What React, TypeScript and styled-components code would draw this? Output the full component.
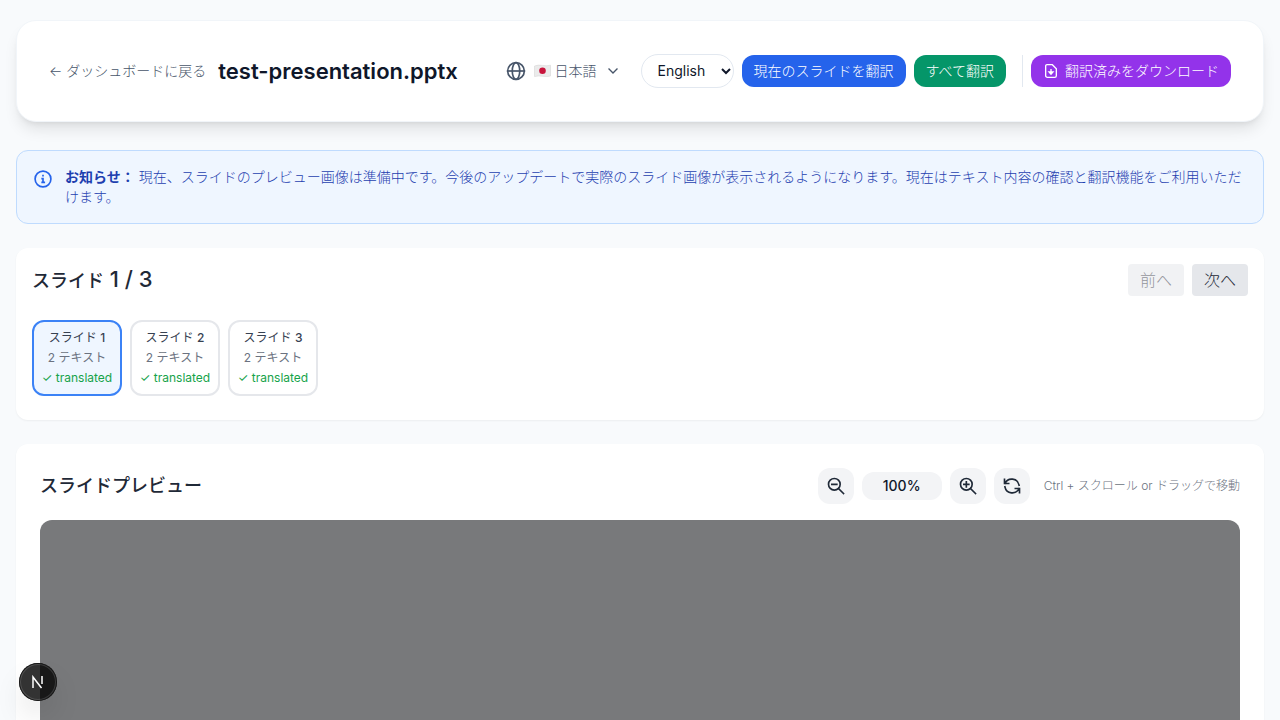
import React from 'react';
import styled, { createGlobalStyle, css } from 'styled-components';

const GlobalStyle = createGlobalStyle`
  *, *::before, *::after { box-sizing: border-box; }
  body {
    margin: 0;
    background: #f8fafc;
    color: #0f172a;
    font-family: Inter, "Noto Sans CJK JP", sans-serif;
    font-size: 16px;
    line-height: 24px;
  }
  h1, h2, p { margin: 0; }
  button, select { font: inherit; color: inherit; border: 0; margin: 0; cursor: pointer; }
  svg { display: block; flex-shrink: 0; }
`;

const Page = styled.main`
  display: flex;
  flex-direction: column;
  gap: 24px;
  padding: 20px 16px 24px;
`;

const Header = styled.header`
  display: flex;
  align-items: center;
  justify-content: space-between;
  gap: 16px;
  padding: 32px;
  min-height: 102px;
  margin-bottom: 4px;
  background: #fff;
  border: 1px solid #f1f5f9;
  border-radius: 20px;
  box-shadow: 0 10px 15px -3px rgba(0, 0, 0, 0.1), 0 4px 6px -4px rgba(0, 0, 0, 0.1);
`;

const HeaderGroup = styled.div<{ $gap: number }>`
  display: flex;
  align-items: center;
  gap: ${(p) => p.$gap}px;
  white-space: nowrap;
`;

const BackLink = styled.a`
  color: #475569;
  font-size: 14px;
  line-height: 20px;
  font-weight: 300;
  text-decoration: none;
`;

const FileName = styled.h1`
  font-size: 22px;
  line-height: 32px;
  font-weight: 600;
`;

const LanguageButton = styled.button`
  display: flex;
  align-items: center;
  gap: 8px;
  padding: 6px 12px;
  background: none;
  color: #475569;
  font-size: 14px;
  line-height: 20px;
  font-weight: 300;
`;

const LanguageName = styled.span`
  display: flex;
  align-items: center;
  gap: 4px;
`;

const SelectWrap = styled.div`
  position: relative;
  color: #0f172a;
  svg { position: absolute; right: 3px; top: 12px; pointer-events: none; }
`;

const TargetSelect = styled.select`
  appearance: none;
  width: 93px;
  height: 34px;
  padding: 0 16px;
  background: #fff;
  border: 1px solid #e2e8f0;
  border-radius: 17px;
  font-size: 14px;
`;

const ActionButton = styled.button<{ $color: string }>`
  display: flex;
  align-items: center;
  gap: 6px;
  height: 32px;
  padding: 0 12px;
  background: ${(p) => p.$color};
  color: #fff;
  border-radius: 12px;
  font-size: 14px;
  line-height: 20px;
  font-weight: 300;
`;

const Divider = styled.span`
  width: 1px;
  height: 32px;
  margin-left: 8px;
  background: #e2e8f0;
`;

const Notice = styled.section`
  display: flex;
  gap: 12px;
  padding: 16px;
  background: #eff6ff;
  border: 1px solid #bfdbfe;
  border-radius: 12px;
  color: #1e40af;
  font-size: 14px;
  line-height: 20px;
  font-weight: 300;
  svg { margin-top: 2px; color: #2563eb; }
  strong { font-weight: 700; }
`;

const Panel = styled.section<{ $pad: number }>`
  padding: ${(p) => p.$pad}px;
  background: #fff;
  border-radius: 12px;
  box-shadow: 0 1px 2px rgba(0, 0, 0, 0.05);
`;

const PanelHead = styled.div<{ $space: number }>`
  display: flex;
  align-items: center;
  justify-content: space-between;
  margin-bottom: ${(p) => p.$space}px;
`;

const PanelTitle = styled.h2`
  font-size: 18px;
  line-height: 28px;
  font-weight: 500;
  color: #1f2937;
`;

const SlideCount = styled.span`
  font-size: 22px;
`;

const ButtonRow = styled.div`
  display: flex;
  align-items: center;
  gap: 8px;
`;

const SlideStrip = styled(ButtonRow)`
  padding-bottom: 8px;
`;

const StepButton = styled.button`
  height: 32px;
  padding: 0 12px;
  background: #e5e7eb;
  color: #1f2937;
  border-radius: 4px;
  font-weight: 300;
  &:disabled { opacity: 0.5; cursor: default; }
`;

const SlideCard = styled.button<{ $active?: boolean }>`
  width: 90px;
  padding: 6px 0;
  background: #fff;
  border: 2px solid #e5e7eb;
  border-radius: 12px;
  text-align: center;
  white-space: nowrap;
  font-size: 12px;
  line-height: 20px;
  ${(p) => p.$active && css`
    background: #eff6ff;
    border-color: #3b82f6;
  `}
`;

const CardLine = styled.span<{ $color: string }>`
  display: block;
  color: ${(p) => p.$color};
  b { font-weight: 500; }
`;

const IconButton = styled.button`
  display: grid;
  place-items: center;
  width: 36px;
  height: 36px;
  padding: 0;
  background: #f3f4f6;
  color: #1f2937;
  border-radius: 12px;
`;

const ZoomLevel = styled.span`
  width: 80px;
  padding: 4px 0;
  background: #f3f4f6;
  border-radius: 12px;
  text-align: center;
  font-size: 14px;
  line-height: 20px;
  font-weight: 500;
`;

const Hint = styled.span`
  margin-left: 6px;
  color: #6b7280;
  font-size: 12px;
  line-height: 16px;
  font-weight: 300;
`;

const Canvas = styled.div`
  height: 600px;
  background: #78797b;
  border-radius: 12px;
`;

const DevBadge = styled.button`
  position: fixed;
  left: 19px;
  bottom: 19px;
  display: grid;
  place-items: center;
  width: 38px;
  height: 38px;
  padding: 0;
  background: rgba(0, 0, 0, 0.8);
  color: #fff;
  border-radius: 50%;
  box-shadow: inset 0 0 0 1px #171717, inset 0 0 0 2px rgba(255, 255, 255, 0.14), 0 16px 32px -8px rgba(0, 0, 0, 0.24);
`;

type IconProps = { size?: number; stroke?: number; children: React.ReactNode };

const Icon = ({ size = 20, stroke = 2, children }: IconProps) => (
  <svg width={size} height={size} viewBox="0 0 24 24" fill="none" stroke="currentColor" strokeWidth={stroke} strokeLinecap="square" aria-hidden="true">
    {children}
  </svg>
);

const JapanFlag = () => (
  <svg width="17" height="14" viewBox="0 0 17 14" role="img" aria-label="日本">
    <path d="M.5 2Q4 .6 8.5 1.4T16.5 1.2V12Q13 13 8.5 12.2T.5 12.6Z" fill="#ebebeb" stroke="#d6d6d6" strokeWidth=".6" />
    <circle cx="8.5" cy="6.8" r="3.3" fill="#c8143c" />
  </svg>
);

const slides = [1, 2, 3];

export default function App() {
  return (
    <>
      <GlobalStyle />
      <Page>
        <Header>
          <HeaderGroup $gap={12}>
            <BackLink href="#">← ダッシュボードに戻る</BackLink>
            <FileName>test-presentation.pptx</FileName>
          </HeaderGroup>
          <HeaderGroup $gap={8}>
            <LanguageButton type="button">
              <Icon>
                <circle cx="12" cy="12" r="10" />
                <ellipse cx="12" cy="12" rx="4.5" ry="10" />
                <path d="M2 12h20" />
              </Icon>
              <LanguageName>
                <JapanFlag />
                日本語
              </LanguageName>
              <Icon size={16}><path d="m6 9 6 6 6-6" /></Icon>
            </LanguageButton>
            <SelectWrap>
              <TargetSelect aria-label="翻訳先の言語" defaultValue="en">
                <option value="en">English</option>
                <option value="ja">日本語</option>
              </TargetSelect>
              <svg width="10" height="10" viewBox="0 0 10 10" fill="none" stroke="currentColor" strokeWidth="2" aria-hidden="true">
                <path d="m1 3 4 4 4-4" />
              </svg>
            </SelectWrap>
            <ActionButton $color="#2563eb">現在のスライドを翻訳</ActionButton>
            <ActionButton $color="#059669">すべて翻訳</ActionButton>
            <Divider />
            <ActionButton $color="#9333ea">
              <Icon size={16}>
                <path d="M6 2.5h8l6 6V19a2.500 2.500 0 0 1-2.500 2.500h-11A2.500 2.500 0 0 1 4 19V4.500a2 2 0 0 1 2-2Z" />
                <path d="M12 10v4" />
                <path d="M9 13.500h6L12 17Z" fill="currentColor" />
              </Icon>
              翻訳済みをダウンロード
            </ActionButton>
          </HeaderGroup>
        </Header>

        <Notice>
          <Icon>
            <circle cx="12" cy="12" r="9.500" />
            <path d="M11 11.500h1V16M11 16h2.500M12 8h.01" />
          </Icon>
          <p><strong>お知らせ：</strong> 現在、スライドのプレビュー画像は準備中です。今後のアップデートで実際のスライド画像が表示されるようになります。現在はテキスト内容の確認と翻訳機能をご利用いただけます。</p>
        </Notice>

        <Panel $pad={16}>
          <PanelHead $space={24}>
            <PanelTitle>スライド<SlideCount> 1 / 3</SlideCount></PanelTitle>
            <ButtonRow>
              <StepButton disabled>前へ</StepButton>
              <StepButton>次へ</StepButton>
            </ButtonRow>
          </PanelHead>
          <SlideStrip>
            {slides.map((n) => (
              <SlideCard key={n} $active={n === 1}>
                <CardLine $color="#374151">スライド <b>{n}</b></CardLine>
                <CardLine $color="#6b7280">2 テキスト</CardLine>
                <CardLine $color="#16a34a">✓ translated</CardLine>
              </SlideCard>
            ))}
          </SlideStrip>
        </Panel>

        <Panel $pad={24}>
          <PanelHead $space={16}>
            <PanelTitle>スライドプレビュー</PanelTitle>
            <ButtonRow>
              <IconButton aria-label="縮小">
                <Icon><circle cx="10" cy="10" r="7" /><path d="m15 15 6 6M7 10h6" /></Icon>
              </IconButton>
              <ZoomLevel>100%</ZoomLevel>
              <IconButton aria-label="拡大">
                <Icon><circle cx="10" cy="10" r="7" /><path d="m15 15 6 6M7 10h6M10 7v6" /></Icon>
              </IconButton>
              <IconButton aria-label="リセット">
                <Icon><path d="M3 4v5h5M3.500 9a9 9 0 0 1 17 2M21 20v-5h-5M20.500 15a9 9 0 0 1-17-2" /></Icon>
              </IconButton>
              <Hint>Ctrl + スクロール or ドラッグで移動</Hint>
            </ButtonRow>
          </PanelHead>
          <Canvas />
        </Panel>
      </Page>
      <DevBadge aria-label="Next.js">
        <svg width="14" height="14" viewBox="0 0 14 14" fill="none" stroke="currentColor" strokeWidth="1.5" aria-hidden="true">
          <path d="M2 13V2l8.500 11M11 1v8" />
        </svg>
      </DevBadge>
    </>
  );
}
